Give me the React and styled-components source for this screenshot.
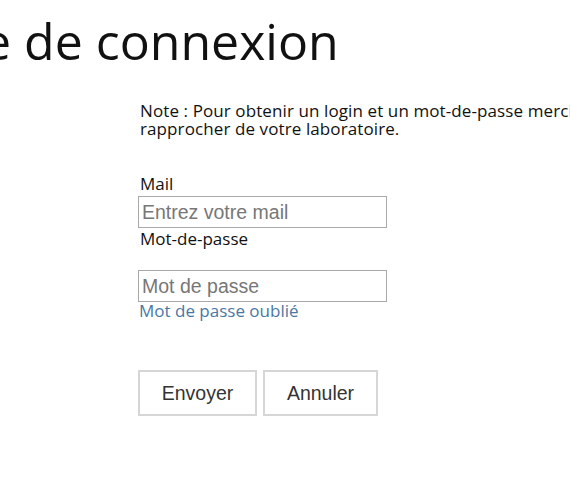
import React from "react";
import styled, { createGlobalStyle } from "styled-components";

const Global = createGlobalStyle`
  html, body { margin: 0; padding: 0; background: #fff; overflow: hidden; }
  body { font-family: "Open Sans", "Noto Sans", sans-serif; color: #111; }
`;

const Page = styled.div`
  width: 570px;
  height: 481px;
  overflow: hidden;
`;

const Title = styled.h1`
  margin: 0;
  padding-top: 10px;
  margin-left: -102px;
  font-family: "Open Sans", sans-serif;
  font-weight: 400;
  font-size: 50px;
  line-height: 62px;
  color: #111;
  white-space: nowrap;
`;

const Content = styled.div`
  display: flex;
  flex-direction: column;
  padding-left: 138px;
  width: 520px;
`;

const Note = styled.p`
  margin: 30px 0 0 2px;
  font-family: "Open Sans", sans-serif;
  font-size: 17px;
  line-height: 18px;
  letter-spacing: 0.1px;
  white-space: nowrap;
  color: #111;
`;

const Field = styled.div`
  display: flex;
  flex-direction: column;
  margin-top: ${(p) => p.$top}px;
`;

const Label = styled.label`
  font-family: "Open Sans", sans-serif;
  font-size: 17px;
  line-height: 18px;
  margin-left: 2px;
  color: #111;
`;

const Input = styled.input`
  box-sizing: border-box;
  width: 249px;
  height: 32px;
  margin-top: ${(p) => p.$top || 0}px;
  border: 1px solid #a9a9a9;
  padding: 0 3px;
  font-family: "Liberation Sans", Arial, sans-serif;
  font-size: 19.5px;
  color: #333;
  outline: none;
  &::placeholder { color: #777; }
`;

const Link = styled.a`
  font-family: "Open Sans", sans-serif;
  font-size: 17px;
  line-height: 18px;
  color: #4a78a3;
  text-decoration: none;
  margin-left: 1px;
`;

const Buttons = styled.div`
  display: flex;
  gap: 6px;
  margin-top: 50px;
`;

const Button = styled.button`
  box-sizing: border-box;
  width: ${(p) => p.$w}px;
  height: 46px;
  background: #fff;
  border: 2px solid #d6d6d6;
  font-family: "Liberation Sans", Arial, sans-serif;
  font-size: 19.5px;
  color: #333;
  padding: 0;
`;

export default function App() {
  return (
    <Page>
      <Global />
      <Title>Page de connexion</Title>
      <Content>
        <Note>
          Note : Pour obtenir un login et un mot-de-passe merci de vous
          <br />
          rapprocher de votre laboratoire.
        </Note>
        <Field $top={37}>
          <Label htmlFor="mail">Mail</Label>
          <Input id="mail" type="text" placeholder="Entrez votre mail" $top={3} />
        </Field>
        <Field $top={2}>
          <Label htmlFor="pwd">Mot-de-passe</Label>
          <Input id="pwd" type="password" placeholder="Mot de passe" $top={22} />
          <Link href="#">Mot de passe oublié</Link>
        </Field>
        <Buttons>
          <Button $w={119}>Envoyer</Button>
          <Button $w={115}>Annuler</Button>
        </Buttons>
      </Content>
    </Page>
  );
}
